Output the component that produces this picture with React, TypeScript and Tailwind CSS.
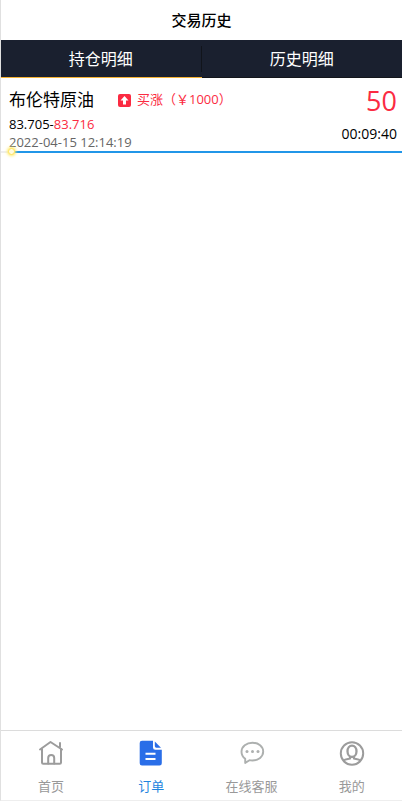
import React, { useState } from "react";

const tabs = ["持仓明细", "历史明细"];

function HomeIcon() {
  return (
    <svg width="26" height="26" viewBox="0 0 26 26" fill="none" stroke="#9c9c9c" strokeWidth="2" strokeLinejoin="round" strokeLinecap="round" aria-hidden="true">
      <path d="M2 9.500 12.500 2 24 9.500" />
      <path d="M4 9v13.500q0 1.200 1.200 1.200h16.600q1.200 0 1.200-1.200V9" />
      <path d="M22 7V3" />
      <path d="M10.200 23.500V18a3 3 0 0 1 6 0v5.500" />
    </svg>
  );
}

function OrderIcon() {
  return (
    <svg width="26" height="26" viewBox="0 0 26 26" fill="#2a6ee8" aria-hidden="true">
      <path d="M4 .8h11v6.700q0 2.300 2.300 2.300h6.500v13.400q0 2.300-2.300 2.300H4q-2.300 0-2.300-2.300V3.100Q1.700.8 4 .8z" />
      <path d="M16.800 1.400 23 7.700h-4.600q-1.600 0-1.600-1.600z" />
      <path d="M7.500 13.800h10M7.500 18.900h10" stroke="#fff" strokeWidth="2" />
    </svg>
  );
}

function ServiceIcon() {
  return (
    <svg width="26" height="26" viewBox="0 0 26 26" fill="none" stroke="#adb0af" strokeWidth="1.900" strokeLinejoin="round" aria-hidden="true">
      <path d="M6.200 18.800C3.800 17 2.500 14.500 2.500 11.800 2.500 6.500 7.500 2.700 13.500 2.700s10.700 3.900 10.700 8.900-4.700 8.900-10.700 8.900c-1.200 0-2 0-3-.3l-4.300 2.700z" />
      <g fill="#adb0af" stroke="none">
        <circle cx="8" cy="11.500" r="1.500" />
        <circle cx="13.500" cy="11.500" r="1.500" />
        <circle cx="19" cy="11.500" r="1.500" />
      </g>
    </svg>
  );
}

function MineIcon() {
  return (
    <svg width="26" height="26" viewBox="0 0 26 26" fill="none" stroke="#9c9c9c" strokeWidth="2" aria-hidden="true">
      <circle cx="13" cy="13.500" r="11.200" />
      <ellipse cx="13" cy="11.300" rx="4.500" ry="5.700" strokeWidth="2.300" />
      <path d="M4.500 20.800c1.800-1.900 4-1.600 6.500-2.300v-2M21.500 20.800c-1.800-1.900-4-1.600-6.500-2.300v-2" />
    </svg>
  );
}

const navItems = [
  { label: "首页", icon: HomeIcon, active: false },
  { label: "订单", icon: OrderIcon, active: true },
  { label: "在线客服", icon: ServiceIcon, active: false },
  { label: "我的", icon: MineIcon, active: false },
];

function Position() {
  return (
    <article>
      <div className="flex justify-between pl-2 pr-[5px] pt-[7px]">
        <div>
          <div className="flex items-center h-[30px]">
            <h2 className="text-[17px] leading-7 text-black">布伦特原油</h2>
            <svg className="ml-6" width="13" height="13" viewBox="0 0 13 13" aria-hidden="true">
              <rect width="13" height="13" rx="2" fill="#fb2b42" />
              <path d="M6.500 2 10.500 6.400H8v4H5v-4H2.500z" fill="#fff" />
            </svg>
            <span className="ml-1.5 text-[13px] text-[#fb2b42]">买涨（￥1000）</span>
          </div>
          <p className="text-[13px] leading-[18px] text-black">
            83.705-<span className="text-[#fb2b42]">83.716</span>
          </p>
          <p className="text-[13px] leading-[18px] text-[#666666]">2022-04-15 12:14:19</p>
        </div>
        <div className="text-right">
          <p className="text-[27px] leading-8 text-[#fb2b42]">50</p>
          <p className="mt-2 text-[14px] leading-[18px] text-black">00:09:40</p>
        </div>
      </div>
      <div className="relative flex h-0.5" role="progressbar" aria-label="00:09:40" aria-valuenow={3} aria-valuemin={0} aria-valuemax={100}>
        <div className="w-[3%] bg-[#eeeeee]" />
        <div className="flex-1 bg-[#2196e8]" />
        <span className="absolute left-[7px] -top-[3px] size-[7px] rounded-full border border-[#ffe45c] bg-[#fffbe0] shadow-[0_0_3px_1px_#ffec70]" />
      </div>
    </article>
  );
}

export default function App() {
  const [activeTab, setActiveTab] = useState(0);

  return (
    <div className="flex min-h-screen flex-col border-b border-l border-b-[#eeeeee] border-l-[#e0e0e0] bg-white font-['Open_Sans','Noto_Sans_CJK_SC',sans-serif]">
      <header className="flex h-10 items-center justify-center">
        <h1 className="text-[15px] font-medium text-black">交易历史</h1>
      </header>
      <div className="grid grid-cols-2 bg-[#1a202f]" role="tablist">
        {tabs.map((tab, i) => (
          <button
            key={tab}
            type="button"
            role="tab"
            aria-selected={activeTab === i}
            onClick={() => setActiveTab(i)}
            className={`flex h-[38px] items-center border-b text-[16px] text-white ${
              activeTab === i ? "border-[#f5b234]" : "border-[#14161b]"
            }`}
          >
            <span className={`flex-1 leading-[26px] ${i === 0 ? "border-r border-[#11141b]" : ""}`}>{tab}</span>
          </button>
        ))}
      </div>
      <main className="flex-1">
        <Position />
      </main>
      <nav className="grid h-[70px] grid-cols-4 border-t border-[#dcdcdc]">
        {navItems.map(({ label, icon: Icon, active }) => (
          <a
            key={label}
            href="#"
            aria-current={active ? "page" : undefined}
            className={`flex flex-col items-center pt-[9px] text-[13px] leading-5 ${
              active ? "text-[#1f85de]" : "text-[#999999]"
            }`}
          >
            <Icon />
            <span className="mt-2.5">{label}</span>
          </a>
        ))}
      </nav>
    </div>
  );
}
